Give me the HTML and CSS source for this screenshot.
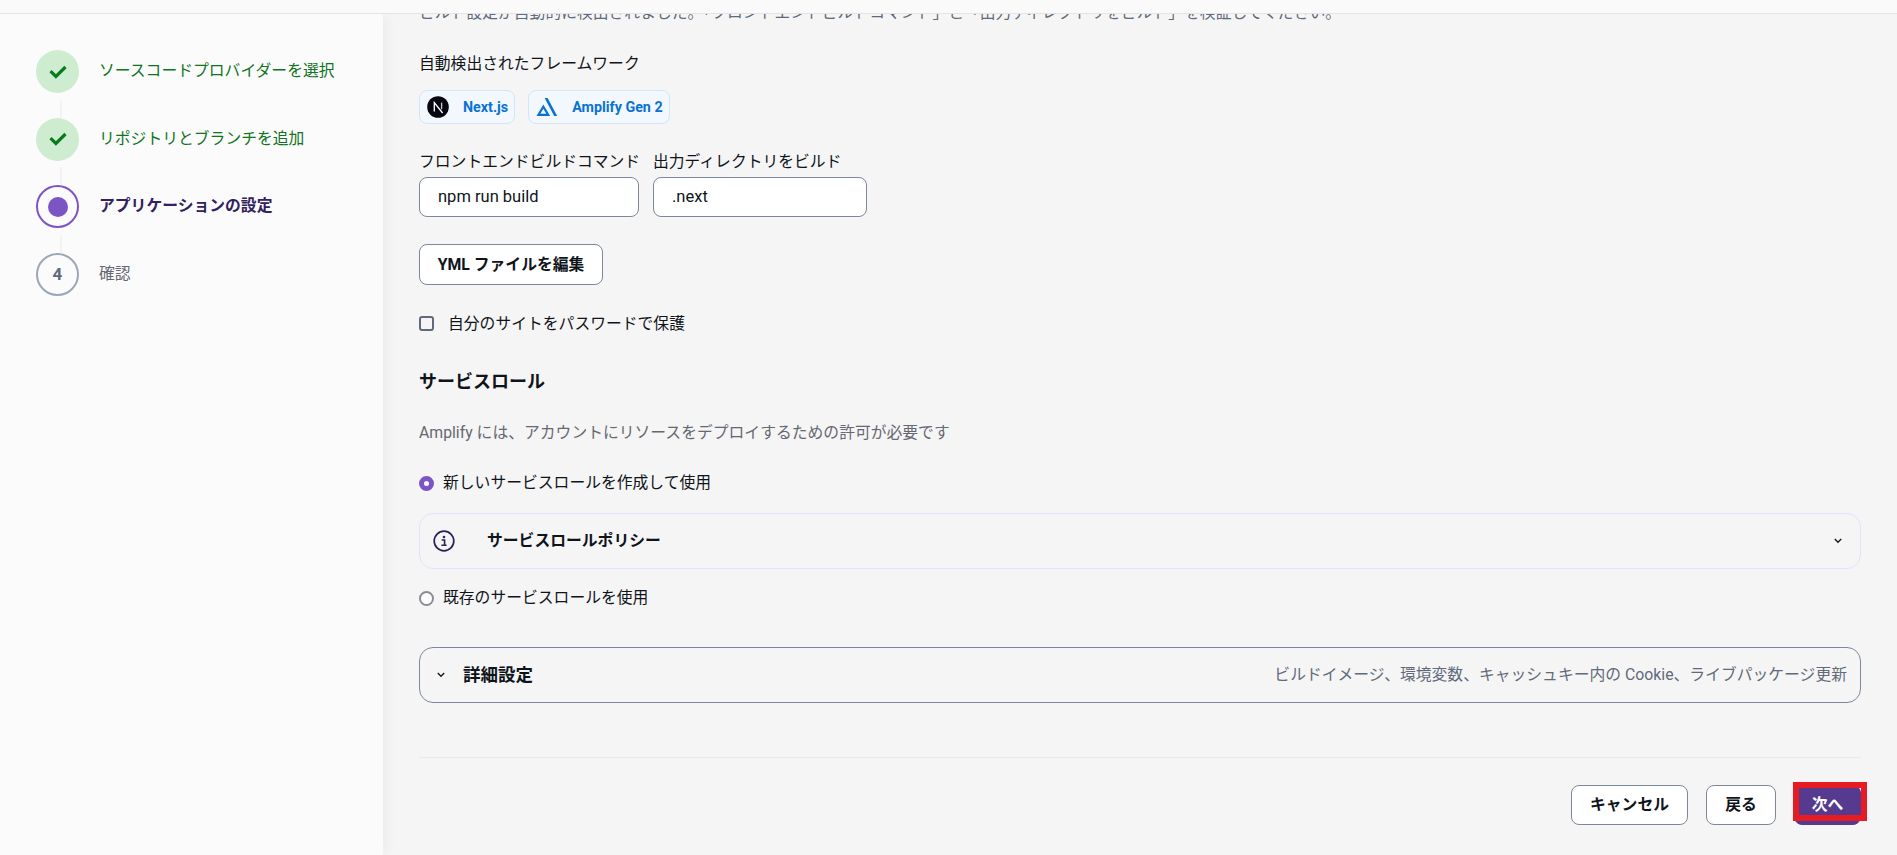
FILE: index.html
```html
<!DOCTYPE html>
<html lang="ja">
<head>
<meta charset="utf-8">
<title>アプリケーションの設定</title>
<link rel="stylesheet" href="styles.css">
</head>
<body>
<header class="topbar"></header>
<div class="shell">
  <nav class="steps">
    <div class="step done">
      <span class="dot"><svg width="18" height="14" viewBox="0 0 18 14"><path d="M1.5 6.2l5.4 5.2L16.5 2" fill="none" stroke="#0b7a1e" stroke-width="3.2"/></svg></span>
      <span class="step-label">ソースコードプロバイダーを選択</span>
    </div>
    <div class="step done">
      <span class="dot"><svg width="18" height="14" viewBox="0 0 18 14"><path d="M1.5 6.2l5.4 5.2L16.5 2" fill="none" stroke="#0b7a1e" stroke-width="3.2"/></svg></span>
      <span class="step-label">リポジトリとブランチを追加</span>
    </div>
    <div class="step current">
      <span class="dot"><span class="dot-fill"></span></span>
      <span class="step-label">アプリケーションの設定</span>
    </div>
    <div class="step todo">
      <span class="dot">4</span>
      <span class="step-label">確認</span>
    </div>
  </nav>
  <main class="main">
    <div class="content">
      <p class="clipped">ビルド設定が自動的に検出されました。「フロントエンドビルドコマンド」と「出力ディレクトリをビルド」を検証してください。</p>
      <p class="label detected nudge">自動検出されたフレームワーク</p>
      <div class="badges">
        <span class="badge">
          <svg class="badge-icon" width="22" height="22" viewBox="0 0 22 22"><circle cx="11" cy="11" r="10.8" fill="#06070f"/><path d="M7.3 15.6V6.6L15.6 17" fill="none" stroke="#fff" stroke-width="1.3"/><path d="M14.6 6.6v6.6" fill="none" stroke="#c9c9d2" stroke-width="1.3"/></svg>
          <span class="badge-text">Next.js</span>
        </span>
        <span class="badge">
          <svg class="badge-icon" width="22" height="20" viewBox="0 0 22 20"><path fill-rule="evenodd" d="M0.5 19L7.3 7.6 14.2 19zM4.4 16.8h5.9L7.3 11.8z" fill="#0972d3"/><path d="M8.6 1h3l9.6 18h-3z" fill="#0972d3"/></svg>
          <span class="badge-text">Amplify Gen 2</span>
        </span>
      </div>
      <div class="fields">
        <div class="field field-build">
          <span class="label field-label">フロントエンドビルドコマンド</span>
          <div class="input">npm run build</div>
        </div>
        <div class="field field-out">
          <span class="label field-label">出力ディレクトリをビルド</span>
          <div class="input">.next</div>
        </div>
      </div>
      <button class="btn yml">YML ファイルを編集</button>
      <div class="check-row"><span class="checkbox"></span><span class="label nudge">自分のサイトをパスワードで保護</span></div>
      <h2 class="section-title">サービスロール</h2>
      <p class="hint nudge">Amplify には、アカウントにリソースをデプロイするための許可が必要です</p>
      <div class="radio-row first"><span class="radio on"></span><span class="label">新しいサービスロールを作成して使用</span></div>
      <div class="policy">
        <svg class="info" width="22" height="22" viewBox="0 0 22 22"><circle cx="11" cy="11" r="9.8" fill="none" stroke="#2d1f5e" stroke-width="1.7"/><circle cx="11" cy="7" r="1.3" fill="#2d1f5e"/><path d="M8.6 10h3v5M8.4 15.2h5.2" fill="none" stroke="#2d1f5e" stroke-width="1.6"/></svg>
        <span class="policy-title">サービスロールポリシー</span>
        <svg class="chev-end" width="8" height="6" viewBox="0 0 8 6"><path d="M0.8 1L4 4.2 7.2 1" fill="none" stroke="#16191f" stroke-width="1.4"/></svg>
      </div>
      <div class="radio-row second"><span class="radio"></span><span class="label">既存のサービスロールを使用</span></div>
      <div class="advanced">
        <svg width="8" height="6" viewBox="0 0 8 6"><path d="M0.8 1L4 4.2 7.2 1" fill="none" stroke="#16191f" stroke-width="1.4"/></svg>
        <span class="advanced-title">詳細設定</span>
        <span class="advanced-note">ビルドイメージ、環境変数、キャッシュキー内の Cookie、ライブパッケージ更新</span>
      </div>
      <hr class="divider">
      <div class="actions">
        <button class="btn cancel">キャンセル</button>
        <button class="btn back">戻る</button>
        <span class="next-wrap">
          <button class="btn next">次へ</button>
          <span class="highlight"></span>
        </span>
      </div>
    </div>
  </main>
</div>
</body>
</html>
```

FILE: styles.css
```css
* { box-sizing: border-box; }
html, body { margin: 0; height: 855px; overflow: hidden; }
body {
  background: #f5f5f5;
  color: #0f141a;
  font-family: Roboto, "Noto Sans CJK JP", sans-serif;
  font-size: 15.8px;
  line-height: 24px;
  display: flex;
  flex-direction: column;
}
p, h2 { margin: 0; }

.topbar {
  height: 14px;
  flex: none;
  background: #fafafa;
  border-bottom: 1px solid #e4e4e6;
  position: relative;
  z-index: 2;
}
.shell { flex: 1; display: flex; min-height: 0; }

.steps {
  width: 383px;
  flex: none;
  background: #fbfbfb;
  box-shadow: 6px 0 10px -2px rgba(0, 0, 0, 0.04);
  padding-top: 36px;
  display: flex;
  flex-direction: column;
  padding-left: 36px;
}
.step {
  display: flex;
  align-items: flex-start;
  height: 67.67px;
  flex: none;
  position: relative;
}
.step + .step::before {
  content: "";
  position: absolute;
  left: 24px;
  top: -18px;
  height: 18px;
  width: 2px;
  background: #f3f3f5;
}
.dot {
  width: 43px;
  height: 43px;
  border-radius: 50%;
  flex: none;
  display: flex;
  align-items: center;
  justify-content: center;
  margin-right: 20px;
}
.step-label { margin-top: 9px; }
.done .dot { background: #cdecd0; }
.done .step-label { color: #0f7321; }
.current .dot { border: 2px solid #7c55c4; }
.dot-fill { width: 20px; height: 20px; border-radius: 50%; background: #7c55c4; }
.current .step-label { font-weight: 700; color: #31215f; }
.todo .dot {
  border: 2px solid #9ba7b6;
  color: #5f6b7a;
  font-weight: 700;
  font-size: 17px;
}
.todo .step-label { color: #656871; }

.main { flex: 1; min-width: 0; overflow: hidden; }
.content {
  margin-top: -13px;
  padding: 0 36px 0 36px;
}
.clipped { color: #5f6b7a; white-space: nowrap; }
.label { color: #0f141a; }
.nudge { line-height: 22px; padding-top: 2px; }
.detected { margin-top: 26px; }

.badges { display: flex; gap: 13px; margin-top: 15px; }
.badge {
  height: 34px;
  display: flex;
  align-items: center;
  gap: 14px;
  border: 1px solid #d1e6fb;
  background: #f2f8fe;
  border-radius: 8px;
  padding: 0 6px 0 7px;
}
.badge-text { font-weight: 700; font-size: 14.3px; color: #0972d3; }

.fields { display: flex; gap: 14px; margin-top: 26px; }
.field { display: flex; flex-direction: column; }
.field-label { white-space: nowrap; line-height: 24px; height: 27px; }
.field-build { width: 220px; }
.field-out { width: 214px; }
.input {
  height: 40px;
  border: 1px solid #7d8998;
  border-radius: 8px;
  background: #fff;
  padding: 7px 18px;
  color: #0f141a;
  font-size: 16.5px;
}

.btn {
  font-family: inherit;
  font-size: 15.8px;
  font-weight: 700;
  line-height: 24px;
  height: 40px;
  border: 1px solid #7d8998;
  border-radius: 8px;
  background: #fff;
  color: #0f141a;
  padding: 0;
  display: block;
}
.yml { margin-top: 27px; width: 184px; height: 41px; }

.check-row { display: flex; align-items: center; margin-top: 26px; height: 24px; }
.checkbox {
  width: 15px;
  height: 15px;
  border: 2px solid #5f6b7a;
  border-radius: 3px;
  margin-right: 14px;
}
.section-title { font-size: 18px; font-weight: 700; line-height: 26px; padding-top: 2px; margin-top: 32px; color: #0f141a; }
.hint { color: #656871; margin-top: 25px; }

.radio-row { display: flex; align-items: center; height: 24px; }
.radio-row.first { margin-top: 27px; }
.radio-row.second { margin-top: 17px; }
.radio {
  width: 15px;
  height: 15px;
  border-radius: 50%;
  border: 2px solid #8c8c94;
  background: #fff;
  margin-right: 9px;
  flex: none;
}
.radio.on { border: 5px solid #7c55c4; }

.policy {
  height: 56px;
  margin-top: 18px;
  border: 1px solid #e3e1fb;
  border-radius: 14px;
  display: flex;
  align-items: center;
  padding-left: 13px;
  padding-right: 18px;
}
.policy-title { font-weight: 700; margin-left: 32px; }
.chev-end { margin-left: auto; }

.advanced {
  height: 56px;
  margin-top: 37px;
  border: 1px solid #7d8998;
  border-radius: 14px;
  display: flex;
  align-items: center;
  padding: 0 13px 0 17px;
}
.advanced-title { font-weight: 700; font-size: 17.5px; margin-left: 18px; }
.advanced-note { margin-left: auto; color: #5f6b7a; }

.divider { border: 0; border-top: 1px solid #e9e9eb; margin: 54px 0 0; }

.actions { display: flex; justify-content: flex-end; margin-top: 27px; align-items: flex-start; }
.cancel { width: 117px; }
.back { width: 70px; margin-left: 18px; }
.next-wrap { position: relative; margin-left: 18px; display: block; }
.next {
  width: 67px;
  background: #553a8f;
  border-color: #553a8f;
  color: #fff;
}
.highlight {
  position: absolute;
  left: -1px;
  top: -3px;
  width: 74px;
  height: 39px;
  border: 6px solid #e71c22;
  pointer-events: none;
}
```
